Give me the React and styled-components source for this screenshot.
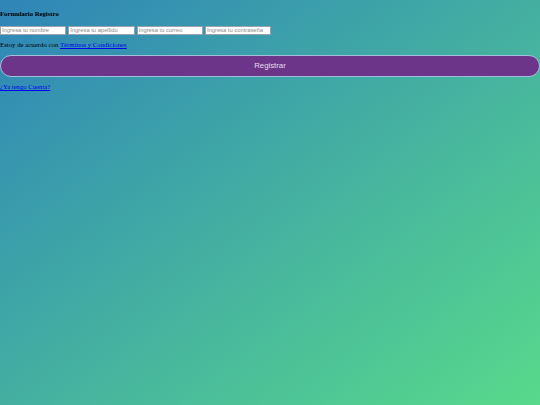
import React from 'react';
import styled, { createGlobalStyle } from 'styled-components';

const GlobalStyle = createGlobalStyle`
  html, body {
    margin: 0;
    padding: 0;
    min-height: 100%;
  }
  body {
    font-family: "Liberation Serif", "Times New Roman", serif;
    font-size: 8px;
    color: #000;
  }
`;

const Page = styled.div`
  min-height: 405px;
  background: linear-gradient(to bottom right, #2f85b8, #58d98b);
`;

const Form = styled.form`
  display: flex;
  flex-direction: column;
  padding-top: 8.5px;
`;

const Title = styled.h4`
  margin: 0 0 8.5px 0;
  font-size: 6.7px;
  font-weight: bold;
  line-height: 9px;
`;

const Fields = styled.div`
  display: flex;
  gap: 2px;
  margin-bottom: 5.5px;
`;

const Field = styled.input`
  box-sizing: border-box;
  width: 66.3px;
  height: 8.5px;
  padding: 0 1px;
  border: 0.5px solid #9aa3ab;
  background: #fff;
  font-family: "Liberation Sans", Arial, sans-serif;
  font-size: 5.8px;
  outline: none;
  &::placeholder {
    color: #8a8a8a;
  }
`;

const Terms = styled.p`
  margin: 0 0 5.5px 0;
  font-size: 6.8px;
  line-height: 9px;
`;

const Link = styled.a`
  color: #0000ee;
  text-decoration: underline;
`;

const Submit = styled.button`
  box-sizing: border-box;
  width: 100%;
  height: 22px;
  border: 1px solid #a4bfdc;
  border-radius: 11px;
  background: #6d3589;
  color: #e6dcef;
  font-family: "Liberation Sans", Arial, sans-serif;
  font-size: 7.8px;
  margin-bottom: 5.5px;
`;

const Footer = styled.p`
  margin: 0;
  font-size: 6.7px;
  line-height: 9px;
`;

export default function App() {
  return (
    <Page>
      <GlobalStyle />
      <Form onSubmit={(e) => e.preventDefault()}>
        <Title>Formulario Registro</Title>
        <Fields>
          <Field type="text" placeholder="Ingresa tu nombre" />
          <Field type="text" placeholder="Ingresa tu apellido" />
          <Field type="email" placeholder="Ingresa tu correo" />
          <Field type="password" placeholder="Ingresa tu contraseña" />
        </Fields>
        <Terms>
          Estoy de acuerdo con <Link href="#">Términos y Condiciones</Link>
        </Terms>
        <Submit type="submit">Registrar</Submit>
        <Footer>
          <Link href="#">¿Ya tengo Cuenta?</Link>
        </Footer>
      </Form>
    </Page>
  );
}
